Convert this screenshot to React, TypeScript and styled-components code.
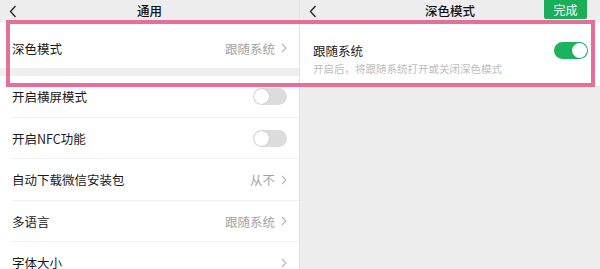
import React from "react";
import styled, { createGlobalStyle } from "styled-components";

const Global = createGlobalStyle`
  html, body { margin: 0; padding: 0; background: #ededed; }
  body { font-family: "Noto Sans CJK SC", "Noto Sans", sans-serif; }
  * { box-sizing: border-box; }
`;

const Page = styled.div`
  position: relative;
  width: 600px;
  height: 269px;
  overflow: hidden;
  display: flex;
  background: #ededed;
`;

const Screen = styled.div<{ $divider?: boolean }>`
  width: 300px;
  height: 269px;
  flex: none;
  display: flex;
  flex-direction: column;
  overflow: hidden;
  background: #ededed;
  border-right: ${(p) => (p.$divider ? "1px solid #e2e2e2" : "none")};
  & > * { flex: none; }
`;

const Header = styled.div`
  height: 22px;
  display: grid;
  grid-template-columns: 60px 1fr 60px;
  align-items: center;
  background: #ededed;
`;

const Back = styled.div`
  padding-left: 9px;
  display: flex;
  align-items: center;
`;

const Title = styled.div`
  text-align: center;
  font-size: 12.5px;
  font-weight: 500;
  color: #111;
  line-height: 20px;
`;

const HeaderRight = styled.div`
  display: flex;
  justify-content: flex-end;
  padding-right: 13px;
  align-self: start;
`;

const DoneButton = styled.div`
  width: 43px;
  height: 19px;
  background: #1aad5a;
  color: #fff;
  font-size: 12px;
  line-height: 19px;
  text-align: center;
  border-radius: 0 0 2px 2px;
`;

const Group = styled.div`
  background: #fff;
  & > * { flex: none; }
`;

const Band = styled.div`
  height: 8px;
  background: #efefef;
`;

const Row = styled.div<{ $h: number; $line?: boolean; $top?: number }>`
  height: ${(p) => p.$h}px;
  display: flex;
  align-items: center;
  padding: ${(p) => p.$top ?? 0}px 12px 0 12px;
  position: relative;
  background: #fff;
  &::after {
    content: "";
    display: ${(p) => (p.$line ? "block" : "none")};
    position: absolute;
    left: 12px;
    right: 0;
    bottom: 0;
    height: 1px;
    background: #eeeeee;
  }
`;

const Label = styled.div`
  flex: 1;
  font-size: 12.5px;
  color: #1a1a1a;
`;

const Value = styled.div`
  font-size: 12.5px;
  color: #a3a3a3;
  margin-right: 6px;
`;

const SettingBlock = styled.div`
  background: #fff;
  height: 64px;
  padding: 17px 12px 0 13px;
  display: flex;
  flex-direction: column;
`;

const SettingLine = styled.div`
  display: flex;
  align-items: center;
  justify-content: space-between;
  height: 22px;
`;

const Hint = styled.div`
  font-size: 10.5px;
  color: #bdbdbd;
`;

const Track = styled.div<{ $on?: boolean }>`
  width: 34px;
  height: 17px;
  border-radius: 9px;
  background: ${(p) => (p.$on ? "#1bb35c" : "#dcdcdc")};
  position: relative;
  flex: none;
`;

const Knob = styled.div<{ $on?: boolean }>`
  position: absolute;
  top: 1px;
  left: ${(p) => (p.$on ? "18px" : "1px")};
  width: 15px;
  height: 15px;
  border-radius: 50%;
  background: #fff;
  box-shadow: 0 0 1px rgba(0, 0, 0, 0.25);
`;

const Highlight = styled.div`
  position: absolute;
  left: 6px;
  top: 20px;
  width: 589px;
  height: 67px;
  border: 4px solid #e56f98;
  pointer-events: none;
`;

const Chevron = () => (
  <svg width="8" height="13" viewBox="0 0 8 13">
    <path d="M6.5 1 L1.5 6.5 L6.5 12" fill="none" stroke="#222" strokeWidth="1.3" />
  </svg>
);

const Arrow = () => (
  <svg width="6" height="10" viewBox="0 0 6 10">
    <path d="M1 1 L5 5 L1 9" fill="none" stroke="#b5b5b5" strokeWidth="1.1" />
  </svg>
);

const Toggle = ({ on }: { on?: boolean }) => (
  <Track $on={on}>
    <Knob $on={on} />
  </Track>
);

export default function App() {
  return (
    <>
      <Global />
      <Page>
        <Screen $divider>
          <Header>
            <Back>
              <Chevron />
            </Back>
            <Title>通用</Title>
            <div />
          </Header>
          <Row $h={46} $top={6}>
            <Label>深色模式</Label>
            <Value>跟随系统</Value>
            <Arrow />
          </Row>
          <Band />
          <Group>
            <Row $h={41.5} $line>
              <Label>开启横屏模式</Label>
              <Toggle />
            </Row>
            <Row $h={41.5} $line>
              <Label>开启NFC功能</Label>
              <Toggle />
            </Row>
            <Row $h={41.5} $line>
              <Label>自动下载微信安装包</Label>
              <Value>从不</Value>
              <Arrow />
            </Row>
            <Row $h={41.5} $line>
              <Label>多语言</Label>
              <Value>跟随系统</Value>
              <Arrow />
            </Row>
            <Row $h={41.5}>
              <Label>字体大小</Label>
              <Arrow />
            </Row>
          </Group>
        </Screen>
        <Screen>
          <Header>
            <Back>
              <Chevron />
            </Back>
            <Title>深色模式</Title>
            <HeaderRight>
              <DoneButton>完成</DoneButton>
            </HeaderRight>
          </Header>
          <SettingBlock>
            <SettingLine>
              <Label>跟随系统</Label>
              <Toggle on />
            </SettingLine>
            <Hint>开启后，将跟随系统打开或关闭深色模式</Hint>
          </SettingBlock>
        </Screen>
        <Highlight />
      </Page>
    </>
  );
}
